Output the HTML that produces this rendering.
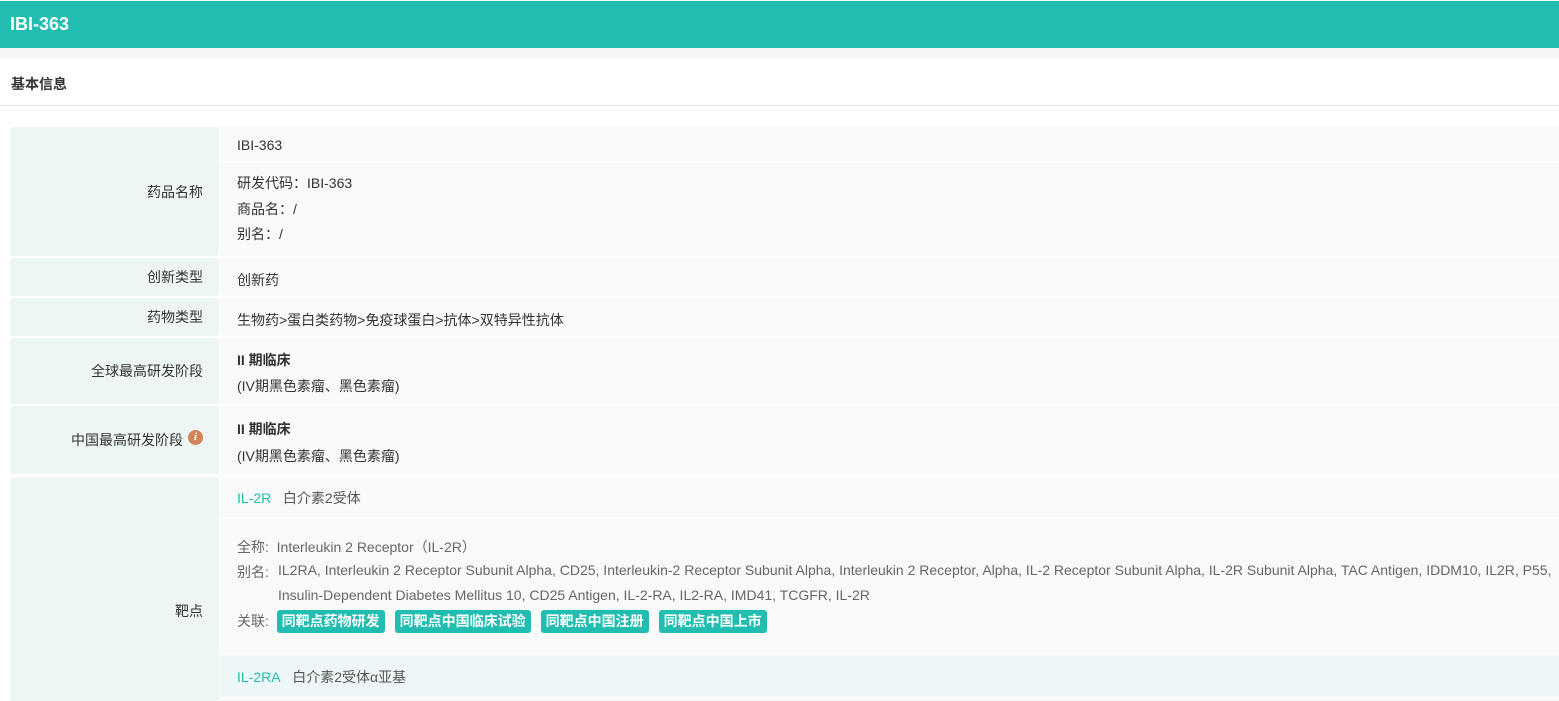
<!DOCTYPE html>
<html style="height:701px;overflow:hidden"><head><meta charset="utf-8"><style>
*{margin:0;padding:0;box-sizing:border-box}
body{width:1559px;height:701px;overflow:hidden;background:#fff;font-family:"Liberation Sans","Noto Sans CJK SC",sans-serif;color:#333;font-size:14px;position:relative}
.a{position:absolute}
.hdr{left:0;top:1px;width:1559px;height:47px;background:#20bdb0;color:#fff;font-weight:bold;font-size:18px;padding:13px 0 0 10px}
.gap{left:0;top:48px;width:1559px;height:10px;background:#f5f6f8}
.sec{left:0;top:58px;width:1559px;height:48px;border-bottom:1px solid #e8e8e8;font-weight:bold;font-size:14px;padding:16px 0 0 11px}
.lab{left:10px;width:209px;background:#eef6f5;text-align:right;padding-right:16px;display:flex;align-items:center;justify-content:flex-end;border-radius:3px}
.val{left:220px;width:1339px;background:#f8fafa;padding-left:17px}
.t{position:absolute;white-space:nowrap}
.g{color:#666;font-size:14px}
.tag{display:inline-block;background:#20bdb0;color:#fff;font-weight:bold;font-size:14px;padding:2px 5px;border-radius:3px;margin-right:10px;line-height:19px}
.lk{color:#20bdb0}
</style></head><body>
<div class="a hdr">IBI-363</div>
<div class="a gap"></div>
<div class="a sec">基本信息</div>

<div class="a lab" style="top:127px;height:129px">药品名称</div>
<div class="a val" style="top:127px;height:34px"><span class="t" style="left:17px;top:10px">IBI-363</span></div>
<div class="a val" style="top:162px;height:94px">
<span class="t" style="left:17px;top:11px">研发代码：IBI-363</span>
<span class="t" style="left:17px;top:37px">商品名：/</span>
<span class="t" style="left:17px;top:62px">别名：/</span></div>

<div class="a lab" style="top:258px;height:38px">创新类型</div>
<div class="a val" style="top:258px;height:38px"><span class="t" style="left:17px;top:12px">创新药</span></div>

<div class="a lab" style="top:298px;height:38px">药物类型</div>
<div class="a val" style="top:298px;height:38px"><span class="t" style="left:17px;top:12px">生物药&gt;蛋白类药物&gt;免疫球蛋白&gt;抗体&gt;双特异性抗体</span></div>

<div class="a lab" style="top:338px;height:66px">全球最高研发阶段</div>
<div class="a val" style="top:338px;height:66px"><span class="t" style="left:17px;top:12px;font-weight:bold">II 期临床</span><span class="t" style="left:17px;top:38px">(IV期黑色素瘤、黑色素瘤)</span></div>

<div class="a lab" style="top:406px;height:68px">中国最高研发阶段<span style="display:inline-block;width:15px;height:15px;border-radius:50%;background:#d4845a;color:#fff;font-size:11px;font-style:italic;font-weight:bold;text-align:center;line-height:15px;margin-left:5px;margin-top:-6px;font-family:'Liberation Serif',serif">i</span></div>
<div class="a val" style="top:406px;height:68px"><span class="t" style="left:17px;top:13px;font-weight:bold">II 期临床</span><span class="t" style="left:17px;top:40px">(IV期黑色素瘤、黑色素瘤)</span></div>

<div class="a lab" style="top:477px;height:224px;align-items:flex-start;padding-top:124px">靶点</div>
<div class="a val" style="top:477px;height:41px"><span class="t g" style="left:17px;top:11px"><span class="lk">IL-2R</span>&nbsp;&nbsp; <span style="color:#555">白介素2受体</span></span></div>
<div class="a val" style="top:519px;height:135px">
<span class="t g" style="left:17px;top:18px">全称:&nbsp; Interleukin 2 Receptor（IL-2R）</span>
<span class="t g" style="left:17px;top:43px">别名:</span>
<span class="t g" style="left:58px;top:43px">IL2RA, Interleukin 2 Receptor Subunit Alpha, CD25, Interleukin-2 Receptor Subunit Alpha, Interleukin 2 Receptor, Alpha, IL-2 Receptor Subunit Alpha, IL-2R Subunit Alpha, TAC Antigen, IDDM10, IL2R, P55,</span>
<span class="t g" style="left:58px;top:68px">Insulin-Dependent Diabetes Mellitus 10, CD25 Antigen, IL-2-RA, IL2-RA, IMD41, TCGFR, IL-2R</span>
<span class="t g" style="left:17px;top:91px;line-height:23px">关联:&nbsp; <span class="tag">同靶点药物研发</span><span class="tag">同靶点中国临床试验</span><span class="tag">同靶点中国注册</span><span class="tag">同靶点中国上市</span></span></div>
<div class="a val" style="top:655px;height:42px;background:#eef7f7"><span class="t g" style="left:17px;top:12px"><span class="lk">IL-2RA</span>&nbsp;&nbsp; <span style="color:#555">白介素2受体α亚基</span></span></div>
<div class="a val" style="top:698px;height:3px"></div>
</body></html>
